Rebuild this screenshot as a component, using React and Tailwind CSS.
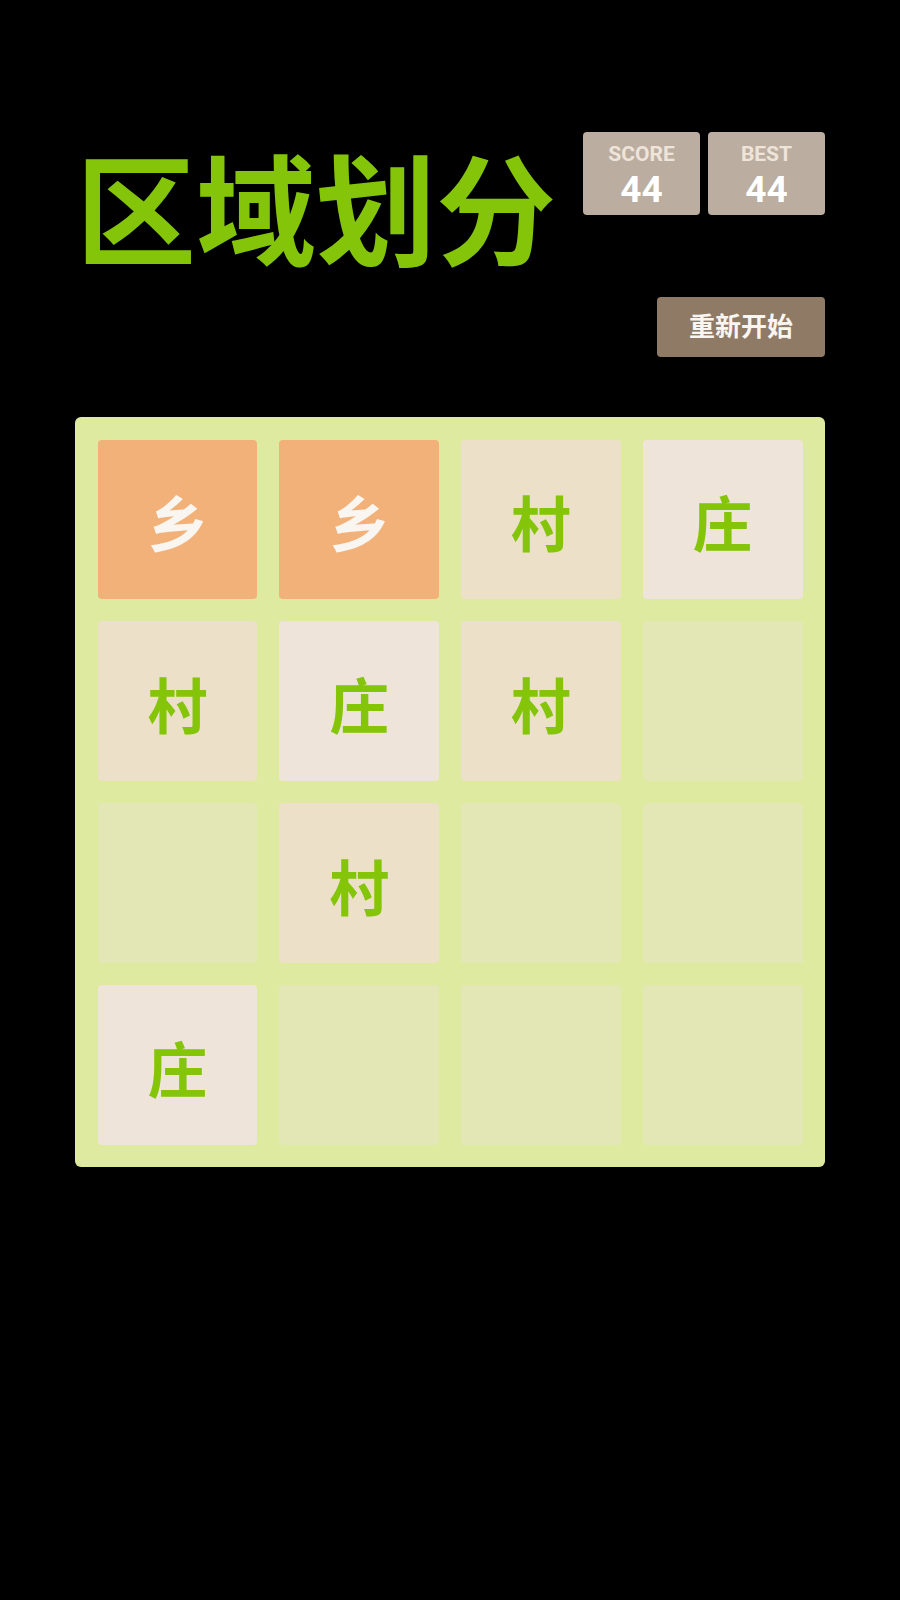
const CELLS = [
  ["乡", "乡", "村", "庄"],
  ["村", "庄", "村", null],
  [null, "村", null, null],
  ["庄", null, null, null],
];

// tile look by character
const TILE_STYLES = {
  乡: "bg-[#f2b179] text-[#f9f6f2]",
  村: "bg-[#ede0c8] text-[#84c50a]",
  庄: "bg-[#eee4da] text-[#84c50a]",
};

const FONT = { fontFamily: "Roboto, 'Noto Sans CJK SC', sans-serif" };

function ScoreBox({ label, value }) {
  return (
    <div className="w-[117px] h-[83px] bg-[#bbada0] rounded-[4px] flex flex-col items-center justify-center pt-[5px]">
      <span className="text-[21px] leading-none font-bold text-[#eee4da]">{label}</span>
      <span className="text-[37px] leading-none font-bold text-white mt-[6px]">{value}</span>
    </div>
  );
}

function Tile({ ch }) {
  if (!ch) return <div className="aspect-square rounded-[4px] bg-[#e3e7b5]" />;
  return (
    <div className={`aspect-square rounded-[4px] flex items-center justify-center pt-[16px] text-[60px] font-bold leading-none ${TILE_STYLES[ch]}`}>
      {ch}
    </div>
  );
}

export default function App() {
  return (
    <div className="min-h-[1600px] bg-black" style={FONT}>
      <div className="w-[750px] mx-auto pt-[132px]">
        {/* Header */}
        <div className="flex justify-between">
          <h1 className="text-[120px] font-bold leading-none text-[#84c50a] mt-[24px] ml-[1px]">区域划分</h1>
          <div className="flex flex-col items-end">
            <div className="flex gap-[8px]">
              <ScoreBox label="SCORE" value="44" />
              <ScoreBox label="BEST" value="44" />
            </div>
            <button className="mt-[82px] w-[168px] h-[60px] bg-[#8f7a66] rounded-[4px] text-[26px] font-bold text-[#f9f6f2]">
              重新开始
            </button>
          </div>
        </div>

        {/* Board */}
        <div className="mt-[60px] bg-[#dfeaa1] rounded-[6px] p-[22.5px] grid grid-cols-4 gap-[21.7px]">
          {CELLS.flat().map((ch, i) => (
            <Tile key={i} ch={ch} />
          ))}
        </div>
      </div>
    </div>
  );
}
